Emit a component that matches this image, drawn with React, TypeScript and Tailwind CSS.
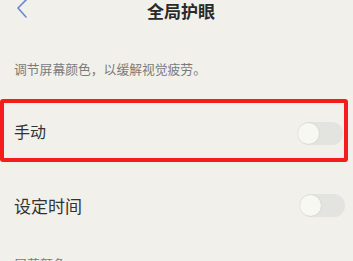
import React from "react";

function Toggle({ className = "" }: { className?: string }) {
  return (
    <div className={`relative w-[45px] h-[23px] rounded-full bg-[#e3e3df] ${className}`}>
      <div className="absolute left-[0px] top-[1px] w-[21px] h-[21px] rounded-full bg-[#f8f8f3] shadow-[0_0_2px_rgba(0,0,0,0.12)]" />
    </div>
  );
}

export default function App() {
  return (
    <div className="w-[353px] h-[261px] overflow-hidden bg-[#f1f0eb] font-['Noto_Sans_CJK_SC','Noto_Sans',sans-serif] text-[#333]">
      {/* header */}
      <div className="relative h-[20px] flex items-center justify-center pl-[9px]">
        <svg
          className="absolute left-[14px] top-[-4px]"
          width="16"
          height="24"
          viewBox="0 0 16 24"
          fill="none"
        >
          <path d="M13 3 L4 12 L12 21" stroke="#6a86cf" strokeWidth="1.6" strokeLinecap="round" strokeLinejoin="round" />
        </svg>
        <span className="text-[17px] leading-none font-bold text-[#2a2a2a] tracking-[0px]">全局护眼</span>
      </div>

      {/* subtitle */}
      <div className="mt-[42px] h-[13px] pl-[14px] text-[12.8px] leading-[13px] text-[#7b7b7b]">
        调节屏幕颜色，以缓解视觉疲劳。
      </div>

      {/* highlighted row */}
      <div className="mt-[24px] w-[348px] h-[63px] border-4 border-[#f31d1d] rounded-[3px] flex items-center justify-between pl-[10px] pr-[1px]">
        <span className="text-[16px] leading-none text-[#333]">手动</span>
        <Toggle className="mt-[5px]" />
      </div>

      {/* second row */}
      <div className="mt-[12px] h-[62px] flex items-center justify-between pl-[14px] pr-[8px]">
        <span className="text-[17px] leading-none text-[#333]">设定时间</span>
        <Toggle />
      </div>

      {/* next label (cut) */}
      <div className="mt-[21px] pl-[14px] text-[13px] leading-[13px] text-[#7b7b7b]">屏幕颜色</div>
    </div>
  );
}
